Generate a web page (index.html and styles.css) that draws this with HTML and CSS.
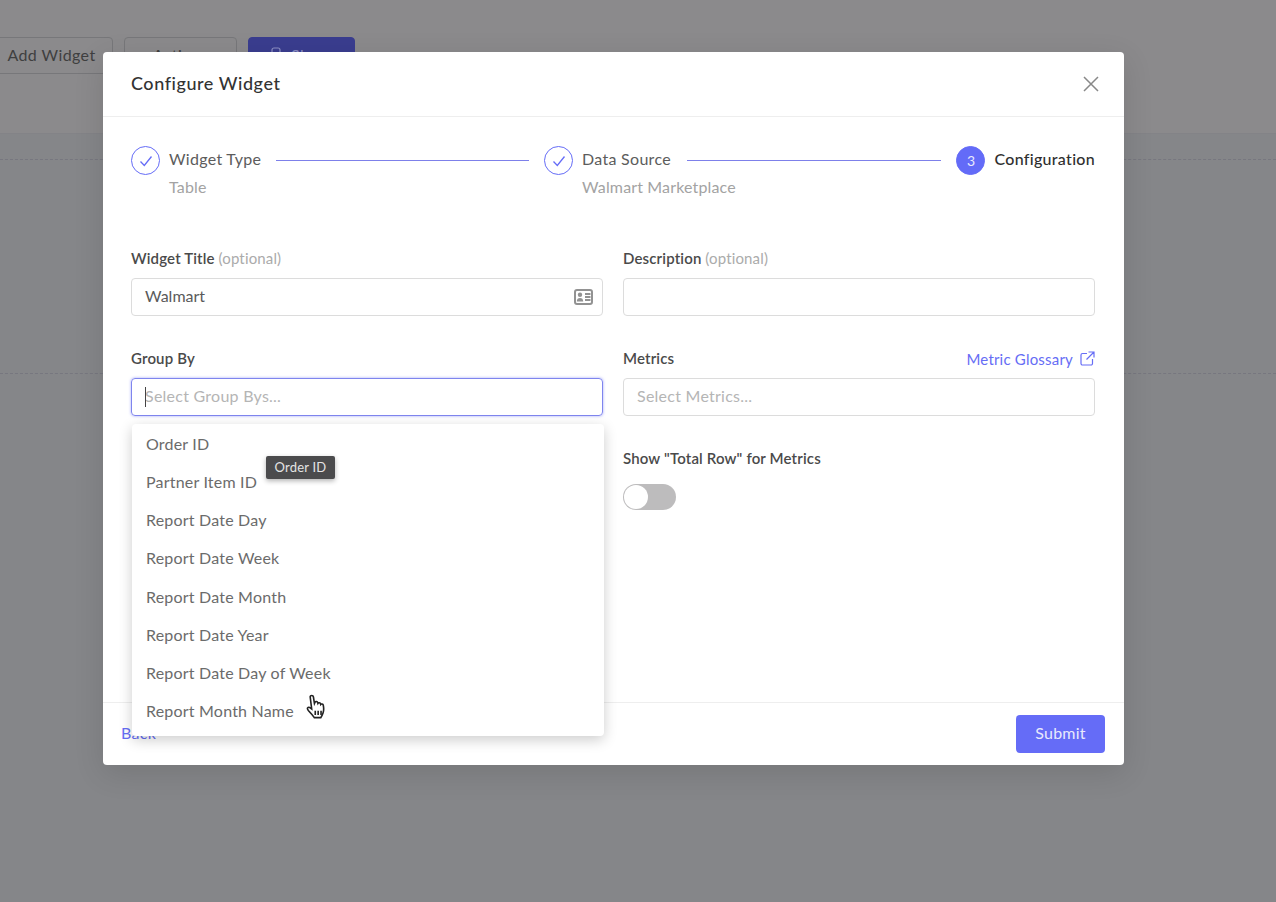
FILE: index.html
```html
<!DOCTYPE html>
<html lang="en">
<head>
    <meta charset="UTF-8">
    <meta name="viewport" content="width=device-width, initial-scale=1.0">
    <title>Configure Widget</title>
    <link rel="stylesheet" href="styles.css">
</head>
<body>
    <div class="toolbar">
        <button class="tool-btn add-btn">Add Widget</button>
        <button class="tool-btn actions-btn">Actions</button>
        <button class="tool-btn share-btn">
            <svg width="10" height="14" viewBox="0 0 10 14"><rect x="1" y="1" width="8" height="12" rx="2"/></svg>
            Share
        </button>
    </div>
    <div class="canvas">
        <div class="canvas-row"></div>
        <div class="canvas-row"></div>
    </div>

    <div class="modal">
        <div class="modal-header">
            <h2>Configure Widget</h2>
            <svg class="close-icon" width="16" height="16" viewBox="0 0 16 16"><path d="M1 1l14 14M15 1L1 15"/></svg>
        </div>

        <div class="modal-body">
            <div class="stepper">
                <div class="step">
                    <div class="step-circle">
                        <svg width="14" height="12" viewBox="0 0 14 12"><path d="M1.5 6.5l3.8 4L12.5 1.5"/></svg>
                    </div>
                    <div class="step-text type-step">
                        <div class="step-title">Widget Type</div>
                        <div class="step-sub">Table</div>
                    </div>
                </div>
                <div class="step-line first-line"></div>
                <div class="step">
                    <div class="step-circle">
                        <svg width="14" height="12" viewBox="0 0 14 12"><path d="M1.5 6.5l3.8 4L12.5 1.5"/></svg>
                    </div>
                    <div class="step-text source-step">
                        <div class="step-title">Data Source</div>
                        <div class="step-sub">Walmart Marketplace</div>
                    </div>
                </div>
                <div class="step-line"></div>
                <div class="step">
                    <div class="step-circle active">3</div>
                    <div class="step-text">
                        <div class="step-title current">Configuration</div>
                    </div>
                </div>
            </div>

            <div class="form-grid">
                <div class="field">
                    <div class="field-label">Widget Title <span class="optional">(optional)</span></div>
                    <div class="input">
                        <span class="value">Walmart</span>
                        <svg class="card-icon" width="19" height="16" viewBox="0 0 19 16">
                            <rect x="1" y="1" width="17" height="14" rx="2"/>
                            <circle class="card-solid" cx="6" cy="5.8" r="2.200"/>
                            <path class="card-solid" d="M2.800 12.500c0-2.400 1.300-3.500 3.200-3.500s3.200 1.100 3.200 3.500z"/>
                            <path d="M11 5h5.500M11 8h5.500M11 11h5.500"/>
                        </svg>
                    </div>
                </div>
                <div class="field">
                    <div class="field-label">Description <span class="optional">(optional)</span></div>
                    <div class="input"></div>
                </div>

                <div class="field">
                    <div class="field-label">Group By</div>
                    <div class="input focused">
                        <span class="caret"></span>
                        <span class="placeholder">Select Group Bys...</span>
                    </div>
                    <div class="dropdown">
                        <div class="dropdown-item">Order ID</div>
                        <div class="dropdown-item">Partner Item ID</div>
                        <div class="dropdown-item">Report Date Day</div>
                        <div class="dropdown-item">Report Date Week</div>
                        <div class="dropdown-item">Report Date Month</div>
                        <div class="dropdown-item">Report Date Year</div>
                        <div class="dropdown-item">Report Date Day of Week</div>
                        <div class="dropdown-item">Report Month Name</div>
                        <div class="tooltip">Order ID</div>
                        <svg class="hand-cursor" width="22" height="26" viewBox="0 0 19 24" preserveAspectRatio="none">
                            <path d="M3.600 2.600c0-1.700 2.600-1.700 2.800 0l.9 6.200.5-1.200c.5-1 2-.8 2.300.3l.2.8c.5-.9 2-.8 2.300.3l.1.7c.6-.7 2-.5 2.200.6.5 2.500.5 5.200-.2 7.300-.5 1.600-1.200 3-1.900 4.200H7.200c-1.300-2-3-4-5-6.300-.9-1.100-1.200-2-.8-2.700.5-.7 1.500-.6 2.300 0l1.200 1z"/>
                            <path d="M8 15.500v3.800M10.500 15.500v3.800M13 15.500v3.800"/>
                        </svg>
                    </div>
                </div>
                <div class="field">
                    <div class="field-label label-row">
                        <span>Metrics</span>
                        <a class="glossary-link" href="#">Metric Glossary
                            <svg width="15" height="15" viewBox="0 0 15 15"><path d="M7 2.500H2.500a1.500 1.500 0 0 0-1.500 1.500v8.500A1.500 1.500 0 0 0 2.500 14H11a1.500 1.500 0 0 0 1.500-1.500V8M8.500 1H14v5.500M14 1L6.500 8.500"/></svg>
                        </a>
                    </div>
                    <div class="input">
                        <span class="placeholder">Select Metrics...</span>
                    </div>
                </div>

                <div class="field"></div>
                <div class="field">
                    <div class="field-label">Show "Total Row" for Metrics</div>
                    <div class="toggle"><span class="toggle-knob"></span></div>
                </div>
            </div>
        </div>

        <div class="modal-footer">
            <a class="back-link" href="#">Back</a>
            <button class="submit-btn">Submit</button>
        </div>
    </div>
</body>
</html>
```

FILE: styles.css
```css
body {
    font-family: 'Lato', 'Liberation Sans', sans-serif;
    margin: 0;
    padding: 0;
    height: 902px;
    overflow: hidden;
    background: #858689;
    color: #333;
}

.toolbar {
    display: flex;
    gap: 11px;
    height: 134px;
    box-sizing: border-box;
    padding-top: 37px;
    margin-left: -10px;
    background: #8b8a8c;
    border-bottom: 1px solid #838387;
}

.tool-btn {
    height: 37px;
    padding: 0 0 2px;
    font-family: inherit;
    font-size: 16px;
    letter-spacing: 0.4px;
    color: #3f3f40;
    background: transparent;
    border: 1px solid #77777a;
    border-radius: 4px;
}

.add-btn {
    width: 123px;
}

.actions-btn {
    width: 113px;
}

.share-btn {
    width: 107px;
    color: #8d8fc4;
    background: #3a3d8f;
    border-color: #3a3d8f;
}

.share-btn svg {
    margin-right: 6px;
    fill: none;
    stroke: #8d8fc4;
    stroke-width: 1.2;
}

.canvas-row {
    height: 213px;
    border-bottom: 1px dashed #77777f;
}

.canvas {
    padding-top: 12px;
}

.canvas-row:first-child {
    height: 13px;
}

.modal {
    position: absolute;
    top: 52px;
    left: 103px;
    width: 1021px;
    height: 713px;
    display: flex;
    flex-direction: column;
    background: #fff;
    border-radius: 4px;
    box-shadow: 0px 8px 30px rgba(0, 0, 0, 0.12);
}

.modal-header {
    display: flex;
    align-items: center;
    justify-content: space-between;
    height: 64px;
    padding: 0 25px 0 28px;
    border-bottom: 1px solid #eeeeee;
}

.modal-header h2 {
    margin: 0 0 2px;
    font-size: 18px;
    font-weight: 500;
    letter-spacing: 0.55px;
    color: #333;
}

.close-icon {
    fill: none;
    stroke: #888;
    stroke-width: 1.5;
}

.modal-body {
    flex: 1;
    padding: 29px 29px 0 28px;
}

.stepper {
    display: flex;
    height: 102px;
}

.step {
    display: flex;
    gap: 9px;
}

.step-circle {
    width: 29px;
    height: 29px;
    box-sizing: border-box;
    display: flex;
    align-items: center;
    justify-content: center;
    border: 1px solid #656cf7;
    border-radius: 50%;
    font-size: 14px;
}

.step-circle svg {
    fill: none;
    stroke: #656cf7;
    stroke-width: 1.3;
}

.step-circle.active {
    background: #636bf8;
    color: #e8e9fd;
}

.step-text {
    padding-top: 3px;
}

.type-step {
    width: 92px;
}

.source-step {
    width: 90px;
}

.step-title {
    font-size: 16px;
    line-height: 20px;
    letter-spacing: 0.3px;
    color: #5c5c5c;
    white-space: nowrap;
}

.step-title.current {
    color: #2f2f2f;
    font-weight: 500;
}

.step-sub {
    width: 0;
    margin-top: 8px;
    font-size: 16px;
    line-height: 20px;
    letter-spacing: 0.15px;
    color: #a3a3a3;
    white-space: nowrap;
}

.step-line {
    flex: 1;
    height: 1px;
    margin: 14px 15px 0;
    background: #7d80ea;
}

.first-line {
    flex: none;
    width: 253px;
}

.form-grid {
    display: grid;
    grid-template-columns: 472px 472px;
    column-gap: 20px;
    grid-auto-rows: 100px;
}

.field {
    position: relative;
}

.field-label {
    height: 20px;
    margin-bottom: 10px;
    font-size: 15px;
    line-height: 20px;
    letter-spacing: 0.15px;
    font-weight: 600;
    color: #4a4a4a;
}

.label-row {
    display: flex;
    justify-content: space-between;
}

.optional {
    font-weight: 400;
    color: #ababab;
}

.glossary-link {
    display: flex;
    align-items: center;
    gap: 7px;
    padding-top: 1px;
    font-size: 15px;
    font-weight: 400;
    letter-spacing: 0.2px;
    color: #666df5;
    text-decoration: none;
}

.glossary-link svg {
    fill: none;
    stroke: #666df5;
    stroke-width: 1.2;
}

.input {
    position: relative;
    display: flex;
    align-items: center;
    justify-content: space-between;
    height: 38px;
    box-sizing: border-box;
    padding: 0 9px 4px 13px;
    border: 1px solid #dcdcdc;
    border-radius: 4px;
    font-size: 16px;
    letter-spacing: 0.25px;
}

.input.focused {
    border-color: #7f85ee;
    box-shadow: 0px 0px 3px rgba(101, 108, 247, 0.6);
}

.value {
    color: #5a5a5a;
    letter-spacing: 0;
}

.placeholder {
    color: #b5b5b5;
}

.caret {
    position: absolute;
    left: 13px;
    top: 8px;
    width: 1px;
    height: 20px;
    background: #444;
}

.card-icon {
    margin-top: 4px;
    fill: none;
    stroke: #929292;
    stroke-width: 2;
}

.card-solid {
    fill: #929292;
    stroke: none;
}

.dropdown {
    position: absolute;
    top: 76px;
    left: 1px;
    z-index: 5;
    width: 472px;
    height: 312px;
    box-sizing: border-box;
    padding-top: 0.500px;
    background: #fff;
    border-radius: 4px;
    box-shadow: 0px 4px 14px rgba(0, 0, 0, 0.2);
}

.dropdown-item {
    height: 38.250px;
    padding-left: 14px;
    font-size: 16px;
    line-height: 38px;
    letter-spacing: 0.2px;
    color: #6b6b6b;
}

.tooltip {
    position: absolute;
    top: 32px;
    left: 134px;
    width: 69px;
    height: 23px;
    font-size: 13px;
    line-height: 23px;
    letter-spacing: 0.2px;
    text-align: center;
    color: #e4e4e4;
    background: #4b4b4d;
    border-radius: 2px;
    box-shadow: 0px 2px 5px rgba(0, 0, 0, 0.3);
}

.hand-cursor {
    position: absolute;
    top: 270px;
    left: 174px;
    fill: #fff;
    stroke: #222;
    stroke-width: 1.4;
}

.toggle {
    position: relative;
    width: 53px;
    height: 26px;
    margin-top: 16px;
    background: #bdbcbd;
    border-radius: 13px;
}

.toggle-knob {
    position: absolute;
    top: 1px;
    left: 1px;
    width: 24px;
    height: 24px;
    background: #fff;
    border-radius: 50%;
}

.modal-footer {
    display: flex;
    align-items: center;
    justify-content: space-between;
    height: 62px;
    padding: 0 19px 0 18px;
    border-top: 1px solid #eeeeee;
}

.back-link {
    margin-bottom: 4px;
    font-size: 16px;
    letter-spacing: 0.3px;
    color: #666df5;
    text-decoration: none;
}

.submit-btn {
    width: 89px;
    height: 38px;
    padding: 0 0 4px;
    font-family: inherit;
    font-size: 16px;
    letter-spacing: 0.2px;
    color: #e8e9fd;
    background: #656cf7;
    border: none;
    border-radius: 4px;
}
```
